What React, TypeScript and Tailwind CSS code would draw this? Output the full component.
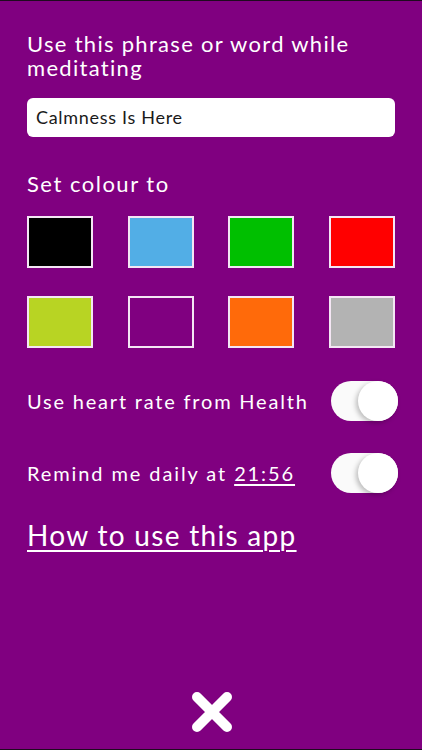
import React from "react";

const swatches = [
  "bg-[#000000]",
  "bg-[#52aee6]",
  "bg-[#00bf00]",
  "bg-[#ff0000]",
  "bg-[#b8d423]",
  "bg-[#800080]",
  "bg-[#ff6a0a]",
  "bg-[#b3b3b3]",
];

function Toggle() {
  return (
    <div className="relative w-[67px] h-[40px] rounded-full bg-[#fafafa] shrink-0">
      <div className="absolute right-0 top-0 w-[40px] h-[40px] rounded-full bg-white shadow-[-2px_2px_5px_rgba(0,0,0,0.25)]" />
    </div>
  );
}

export default function App() {
  return (
    <div
      className="w-full h-[750px] bg-[#800080] border-t border-b border-[#1e0a1e] flex flex-col px-[27px] text-white"
      style={{ fontFamily: "Lato, 'Noto Sans', sans-serif" }}
    >
      <div className="pt-[31px] text-[22px] leading-[24px] tracking-[1.3px]">
        Use this phrase or word while
        <br />
        meditating
      </div>
      <div className="mt-[18px] h-[39px] rounded-[6px] bg-white flex items-center pl-[9px] text-[18px] text-[#1a1a1a] tracking-[0.7px]">
        Calmness Is Here
      </div>
      <div className="mt-[36px] text-[22px] leading-[22px] tracking-[1.5px]">Set colour to</div>
      <div className="mt-[21px] grid grid-cols-[66px_66px_66px_66px] justify-between gap-y-[28px]">
        {swatches.map((c, i) => (
          <div key={i} className={`h-[52px] border-2 border-[#f4e6f4] ${c}`} />
        ))}
      </div>
      <div className="mt-[33px] h-[40px] flex items-center justify-between -mr-[3px]">
        <span className="text-[20px] tracking-[1.8px]">Use heart rate from Health</span>
        <Toggle />
      </div>
      <div className="mt-[32px] h-[40px] flex items-center justify-between -mr-[3px]">
        <span className="text-[20px] tracking-[1.9px]">
          Remind me daily at{" "}
          <span className="underline underline-offset-[3px] decoration-[1.5px]">21:56</span>
        </span>
        <Toggle />
      </div>
      <div className="mt-[26px] text-[28px] leading-[32px] tracking-[1.3px]">
        <span className="underline underline-offset-[4px] decoration-[1.5px]">How to use this app</span>
      </div>
      <div className="mt-auto pb-[17px] flex justify-center">
        <svg width="40" height="40" viewBox="0 0 40 40" className="ml-[1px]">
          <path d="M5 5 L35 35 M35 5 L5 35" stroke="white" strokeWidth="10" strokeLinecap="round" />
        </svg>
      </div>
    </div>
  );
}
